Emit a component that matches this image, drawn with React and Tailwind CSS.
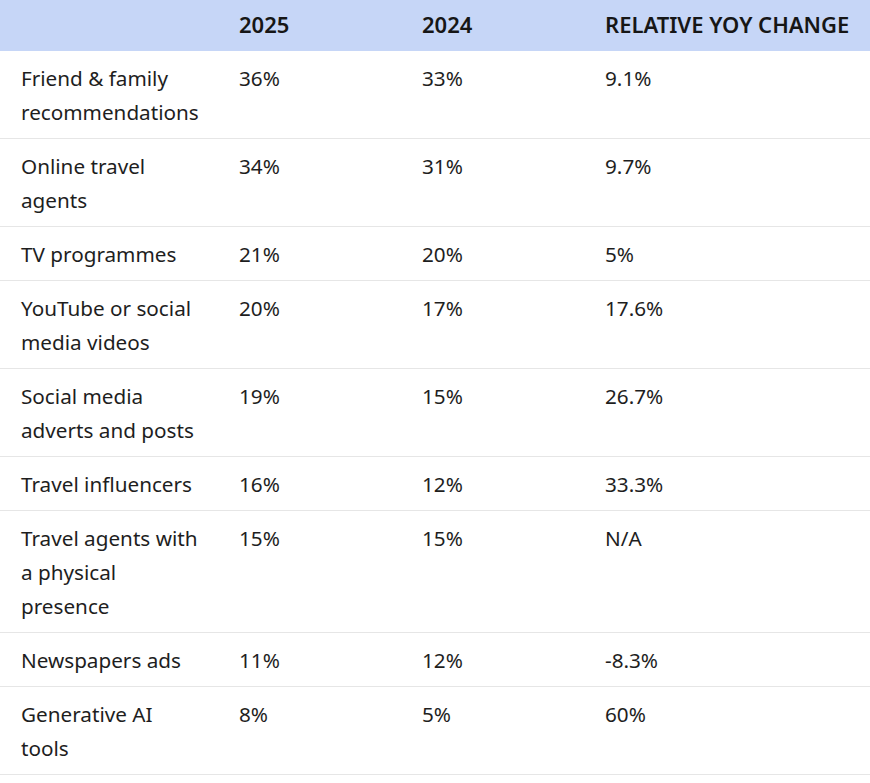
const rows = [
  ["Friend & family recommendations", "36%", "33%", "9.1%"],
  ["Online travel agents", "34%", "31%", "9.7%"],
  ["TV programmes", "21%", "20%", "5%"],
  ["YouTube or social media videos", "20%", "17%", "17.6%"],
  ["Social media adverts and posts", "19%", "15%", "26.7%"],
  ["Travel influencers", "16%", "12%", "33.3%"],
  ["Travel agents with a physical presence", "15%", "15%", "N/A"],
  ["Newspapers ads", "11%", "12%", "-8.3%"],
  ["Generative AI tools", "8%", "5%", "60%"],
];

export default function App() {
  return (
    <div className="min-h-[783px] w-[870px] bg-white text-[#1e1e1e] font-['Noto_Sans','Liberation_Sans',sans-serif]">
      <table className="w-full table-fixed border-collapse text-[20.7px] leading-[34px]">
        <colgroup>
          <col className="w-[218px]" />
          <col className="w-[183px]" />
          <col className="w-[183px]" />
          <col />
        </colgroup>
        <thead>
          <tr className="h-[51px] bg-[#c6d6f7] text-[22px] text-[#161616]">
            <th className="pl-[21px] pb-[3px]"></th>
            <th className="pl-[21px] pb-[3px] text-left font-semibold">2025</th>
            <th className="pl-[21px] pb-[3px] text-left font-semibold">2024</th>
            <th className="pl-[21px] pb-[3px] text-left font-semibold">RELATIVE YOY CHANGE</th>
          </tr>
        </thead>
        <tbody>
          {rows.map((r) => (
            <tr key={r[0]} className="border-b border-[#e6e6e6] align-top">
              <td className="pl-[21px] pr-[17px] pt-[10px] pb-[9px]">{r[0]}</td>
              <td className="pl-[21px] pt-[10px]">{r[1]}</td>
              <td className="pl-[21px] pt-[10px]">{r[2]}</td>
              <td className="pl-[21px] pt-[10px]">{r[3]}</td>
            </tr>
          ))}
        </tbody>
      </table>
    </div>
  );
}
